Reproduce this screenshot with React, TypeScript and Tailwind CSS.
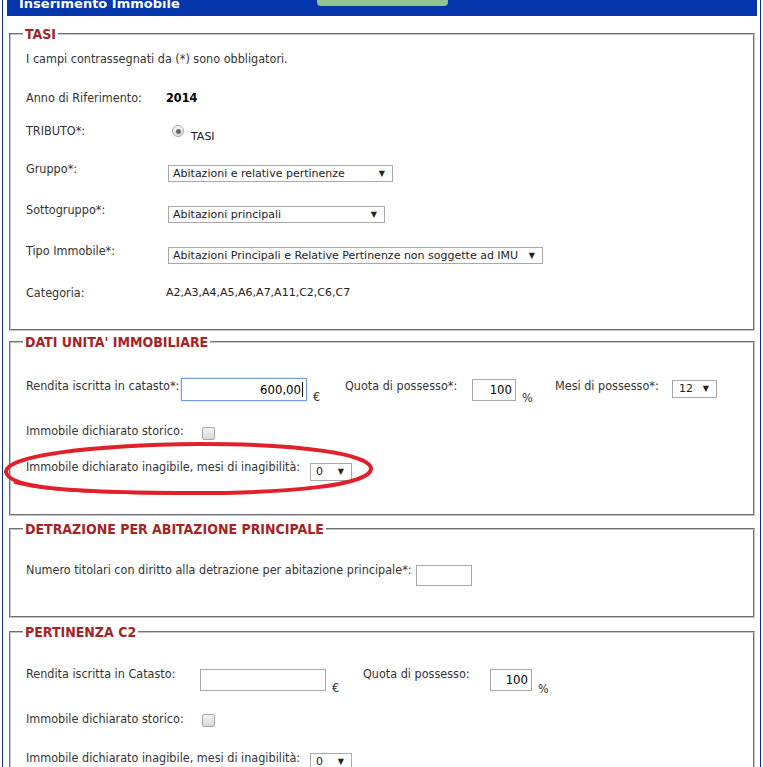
import React from 'react';

const LBL = "whitespace-nowrap font-['DejaVu_Sans_Condensed','Liberation_Sans',sans-serif] text-[12.5px] leading-4 text-[#333]";
const VER = "font-['DejaVu_Sans','Verdana',sans-serif] text-[11px]";

function Box({ title, className, children }: { title: string; className: string; children: React.ReactNode }) {
  return (
    <fieldset className={`mx-[2px] border-2 border-[#c4c4c4] [border-style:groove] pl-[15px] pr-[10px] ${className}`}>
      <legend className="-ml-[3px] px-[2px] font-['DejaVu_Sans_Condensed','Liberation_Sans',sans-serif] text-[14px] font-bold leading-4 text-[#a32424]">
        {title}
      </legend>
      {children}
    </fieldset>
  );
}

function Sel({ className, text }: { className: string; text: string }) {
  return (
    <div className={`flex h-[17px] shrink-0 items-center justify-between border border-[#a9a9a9] bg-white pl-[4px] pr-[7px] text-[#222] ${VER} ${className}`}>
      <span>{text}</span>
      <span className="text-[8px]">▼</span>
    </div>
  );
}

function Check() {
  return <div className="h-[13px] w-[13px] rounded-[2px] border border-[#a6a6a6] bg-gradient-to-b from-[#f4f4f4] to-[#d8d8d8]" />;
}

function Field({ className, value, focused }: { className: string; value?: string; focused?: boolean }) {
  return (
    <div
      className={`flex shrink-0 items-center justify-end bg-white pr-[3px] font-['DejaVu_Sans_Condensed','Liberation_Sans',sans-serif] text-[13px] text-black ${
        focused ? 'border border-[#6f9fdc] shadow-[0_0_2px_#a9c8f0]' : 'border border-[#a9a9a9]'
      } ${className}`}
    >
      {value}
      {focused && <span className="ml-[1px] h-[15px] w-px bg-black" />}
    </div>
  );
}

export default function App() {
  return (
    <div className="relative h-[767px] w-[763px] overflow-hidden bg-white">
      <div className="mx-[2px] h-full border-x border-[#0b2f8f] pl-[4px] pr-[3px]">
        <div className="relative h-[16px] overflow-hidden bg-[#0536ac]">
          <div className="-mt-[4px] pl-[12px] font-['DejaVu_Sans',sans-serif] text-[13px] font-bold leading-4 text-white">
            Inserimento Immobile
          </div>
          <div className="absolute left-[310px] top-0 h-[6px] w-[131px] rounded-b-[4px] bg-[#93c48f]" />
        </div>

        <Box title="TASI" className="mt-[10px] pt-[9px] pb-[28px]">
          <div className={`h-[39px] ${LBL}`}>I campi contrassegnati da (*) sono obbligatori.</div>
          <div className={`flex h-[33px] ${LBL}`}>
            <div className="w-[140px] shrink-0">Anno di Riferimento:</div>
            <div className="font-bold text-black">2014</div>
          </div>
          <div className={`flex h-[38px] ${LBL}`}>
            <div className="w-[140px] shrink-0">TRIBUTO*:</div>
            <div className="ml-[6px] mt-[2px] flex h-[12px] w-[12px] items-center justify-center rounded-full border border-[#a8a8a8] bg-gradient-to-b from-[#f6f6f6] to-[#dcdcdc]">
              <div className="h-[5px] w-[5px] rounded-full bg-[#6b6b6b]" />
            </div>
            <div className={`ml-[7px] mt-[7px] leading-[14px] text-[#222] ${VER}`}>TASI</div>
          </div>
          <div className={`flex h-[41px] ${LBL}`}>
            <div className="w-[142px] shrink-0">Gruppo*:</div>
            <Sel className="mt-[4px] w-[225px]" text="Abitazioni e relative pertinenze" />
          </div>
          <div className={`flex h-[41px] ${LBL}`}>
            <div className="w-[142px] shrink-0">Sottogruppo*:</div>
            <Sel className="mt-[4px] w-[217px]" text="Abitazioni principali" />
          </div>
          <div className={`flex h-[42px] ${LBL}`}>
            <div className="w-[142px] shrink-0">Tipo Immobile*:</div>
            <Sel className="mt-[4px] w-[375px]" text="Abitazioni Principali e Relative Pertinenze non soggette ad IMU" />
          </div>
          <div className={`flex h-[16px] ${LBL}`}>
            <div className="w-[140px] shrink-0">Categoria:</div>
            <div className={`leading-4 text-[#222] ${VER}`}>A2,A3,A4,A5,A6,A7,A11,C2,C6,C7</div>
          </div>
        </Box>

        <Box title="DATI UNITA' IMMOBILIARE" className="mt-[3px] pt-[28px] pb-[33px]">
          <div className={`flex h-[45px] items-start ${LBL}`}>
            <div className="w-[155px] shrink-0">Rendita iscritta in catasto*:</div>
            <Field className="h-[23px] w-[126px]" value="600,00" focused />
            <div className="w-[38px] shrink-0 pl-[6px] pt-[11px]">€</div>
            <div className="w-[127px] shrink-0">Quota di possesso*:</div>
            <Field className="mt-[1px] h-[22px] w-[44px]" value="100" />
            <div className="w-[39px] shrink-0 pl-[6px] pt-[12px]">%</div>
            <div className="w-[117px] shrink-0">Mesi di possesso*:</div>
            <Sel className="mt-[2px] h-[18px] w-[45px] pl-[6px]" text="12" />
          </div>
          <div className={`flex h-[36px] items-start ${LBL}`}>
            <div className="w-[176px] shrink-0">Immobile dichiarato storico:</div>
            <div className="mt-[4px]">
              <Check />
            </div>
          </div>
          <div className={`flex h-[22px] items-start ${LBL}`}>
            <div className="w-[284px] shrink-0">Immobile dichiarato inagibile, mesi di inagibilità:</div>
            <Sel className="mt-[4px] h-[18px] w-[42px] pl-[5px]" text="0" />
          </div>
        </Box>

        <Box title="DETRAZIONE PER ABITAZIONE PRINCIPALE" className="mt-[5px] pt-[25px] pb-[30px]">
          <div className={`flex h-[24px] items-start ${LBL}`}>
            <div className="w-[390px] shrink-0">Numero titolari con diritto alla detrazione per abitazione principale*:</div>
            <Field className="mt-[3px] h-[21px] w-[56px]" />
          </div>
        </Box>

        <Box title="PERTINENZA C2" className="mt-[6px] pt-[26px] pb-[30px]">
          <div className={`flex h-[45px] items-start ${LBL}`}>
            <div className="w-[174px] shrink-0">Rendita iscritta in Catasto:</div>
            <Field className="mt-[3px] h-[22px] w-[126px]" />
            <div className="w-[37px] shrink-0 pl-[6px] pt-[14px]">€</div>
            <div className="w-[127px] shrink-0">Quota di possesso:</div>
            <Field className="mt-[3px] h-[22px] w-[42px]" value="100" />
            <div className="pl-[6px] pt-[15px]">%</div>
          </div>
          <div className={`flex h-[39px] items-start ${LBL}`}>
            <div className="w-[176px] shrink-0">Immobile dichiarato storico:</div>
            <div className="mt-[3px]">
              <Check />
            </div>
          </div>
          <div className={`flex h-[22px] items-start ${LBL}`}>
            <div className="w-[284px] shrink-0">Immobile dichiarato inagibile, mesi di inagibilità:</div>
            <Sel className="mt-[3px] h-[18px] w-[42px] pl-[5px]" text="0" />
          </div>
        </Box>
      </div>

      <svg className="pointer-events-none absolute left-0 top-[438px]" width="380" height="62" viewBox="0 0 380 62">
        <path
          d="M6 34 C4 18 90 7 200 6 C300 6 372 16 371 31 C370 47 290 56 175 55 C70 54 8 50 6 34 Z"
          fill="none"
          stroke="#e0202a"
          strokeWidth="4"
        />
        <path d="M14 44 C40 52 90 55 175 55" fill="none" stroke="#e0202a" strokeWidth="3" />
      </svg>
    </div>
  );
}
